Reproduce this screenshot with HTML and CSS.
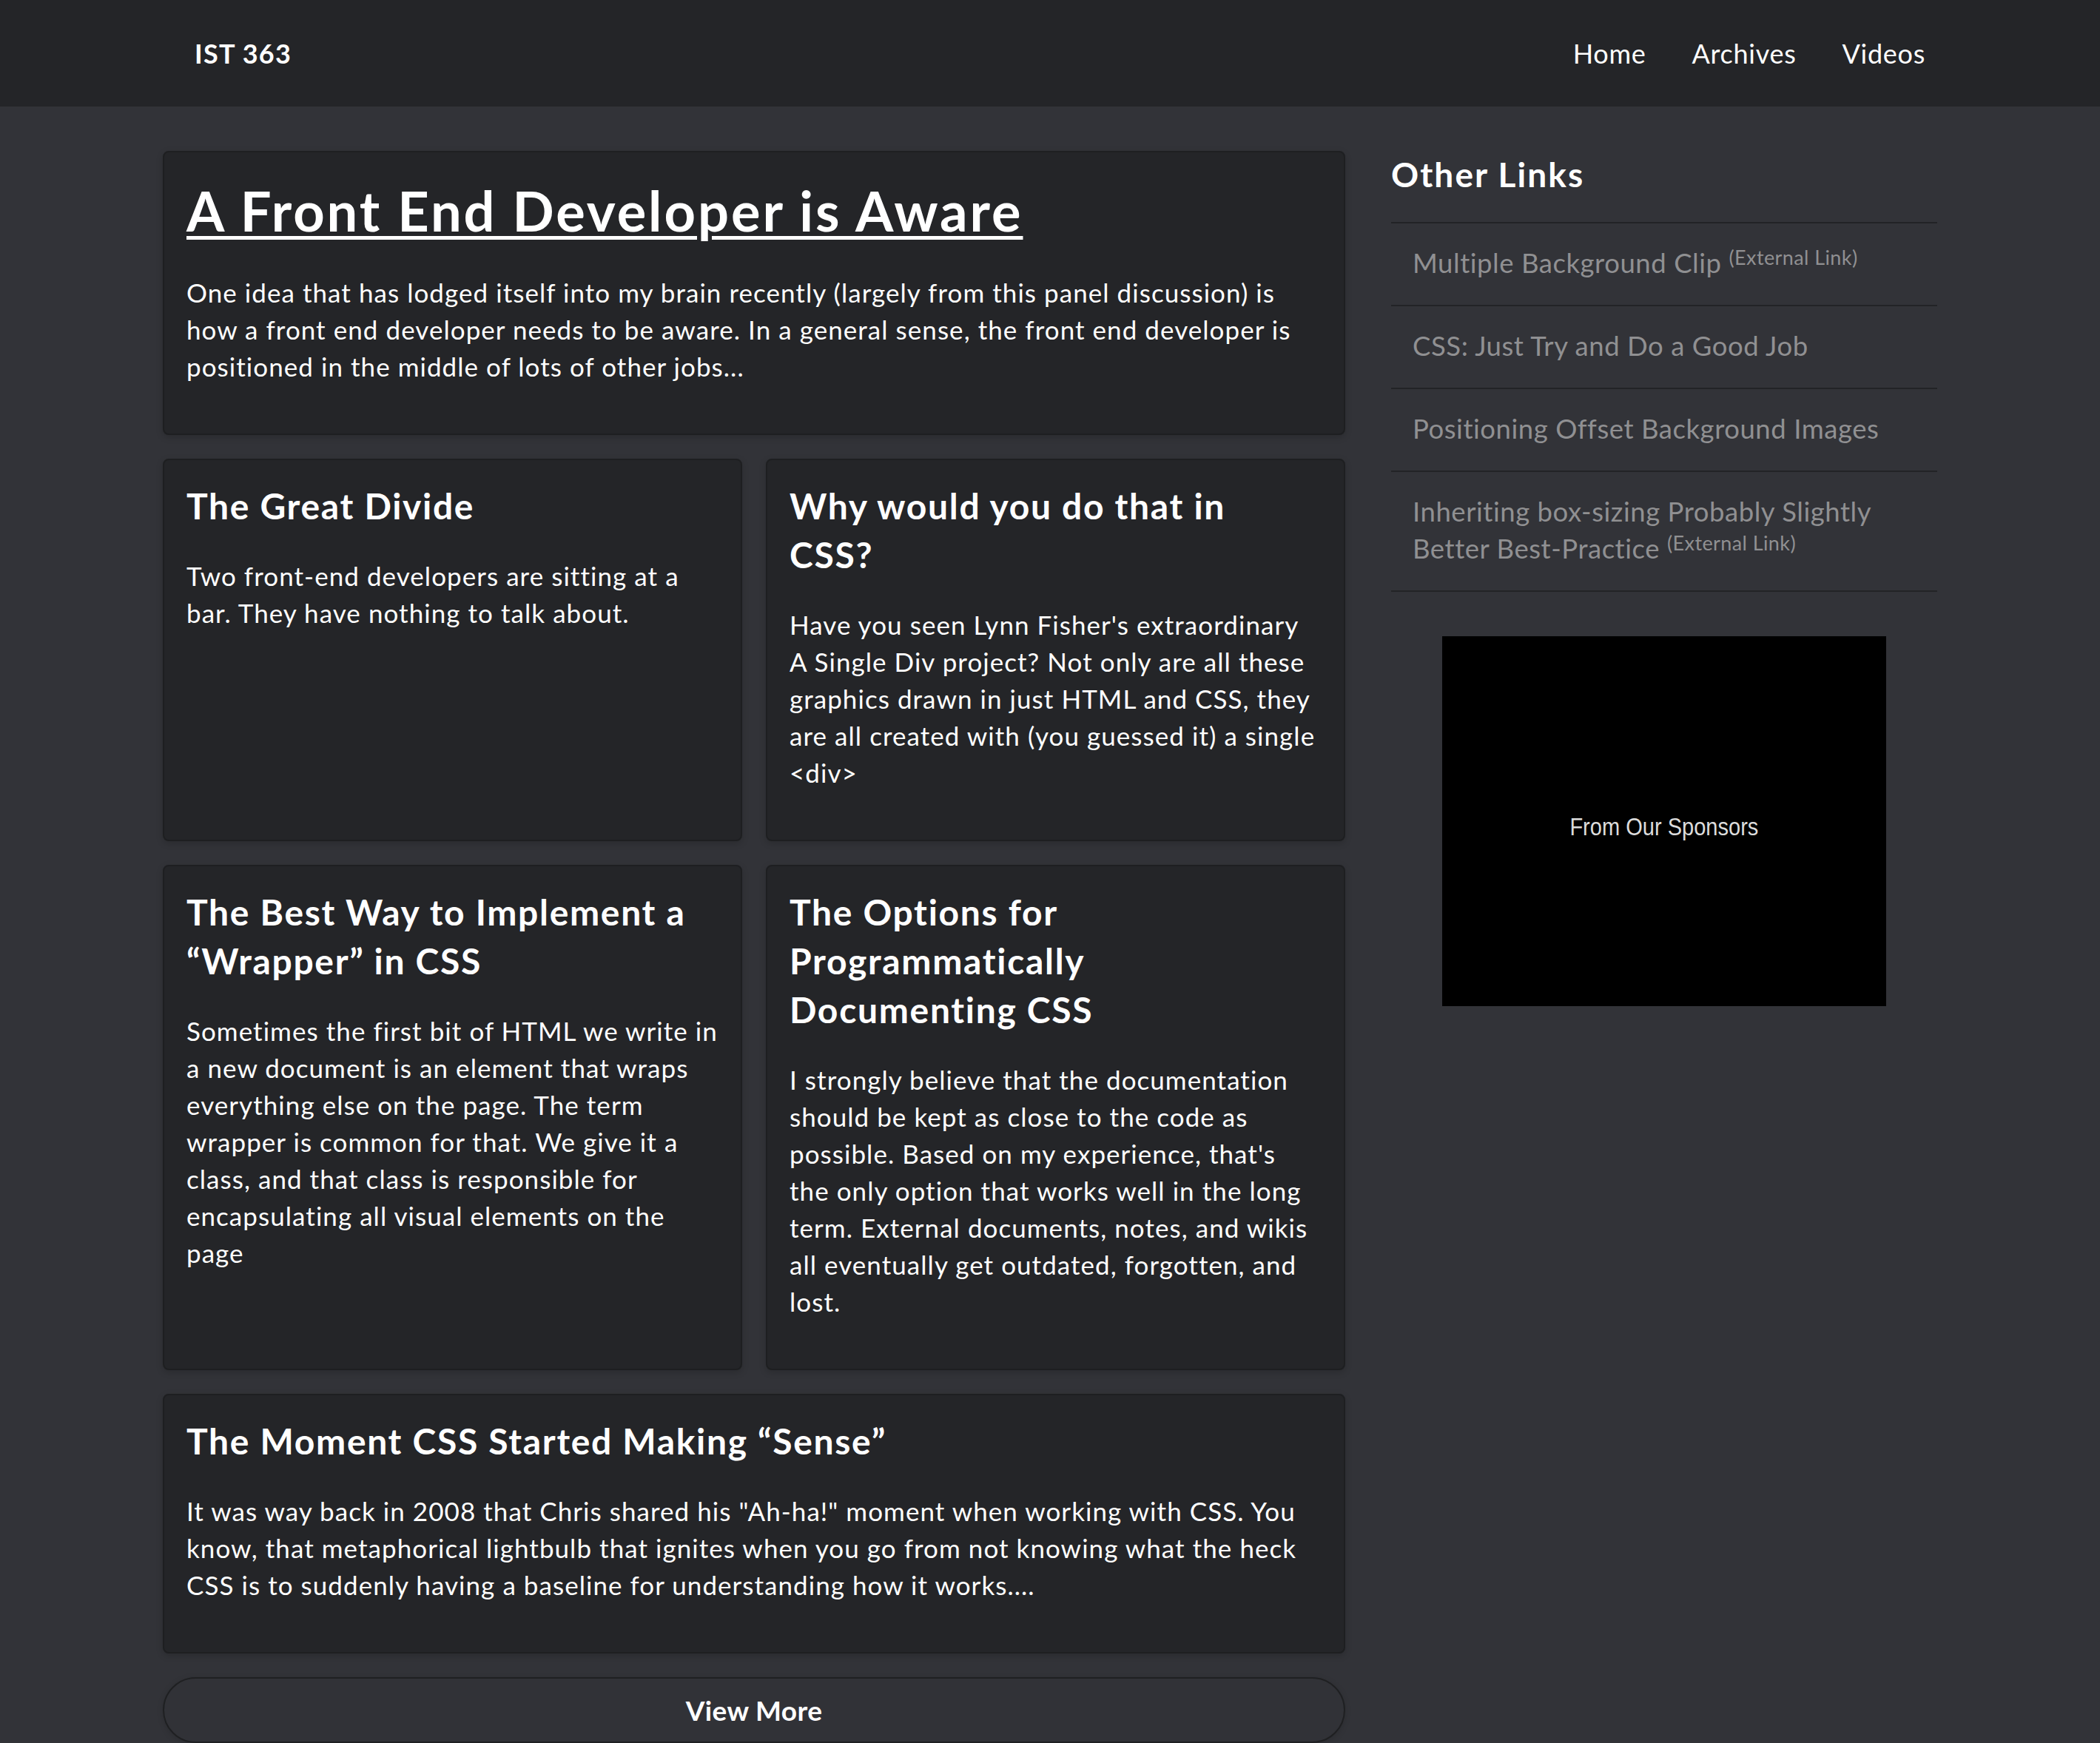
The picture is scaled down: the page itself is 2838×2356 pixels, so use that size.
FILE: index.html
```html
<!DOCTYPE html>
<html lang="en">
<head>
<meta charset="utf-8">
<title>IST 363</title>
<link rel="stylesheet" href="styles.css">
</head>
<body>
<header class="site-header">
  <div class="header-inner">
    <a class="brand" href="#">IST 363</a>
    <nav class="main-nav">
      <a href="#">Home</a>
      <a href="#">Archives</a>
      <a href="#">Videos</a>
    </nav>
  </div>
</header>

<div class="page">
  <main class="posts">
    <article class="card card-featured">
      <h1 class="featured-title"><a href="#">A Front End Developer is Aware</a></h1>
      <p>One idea that has lodged itself into my brain recently (largely from this panel discussion) is<br>how a front end developer needs to be aware. In a general sense, the front end developer is<br>positioned in the middle of lots of other jobs...</p>
    </article>

    <div class="card-grid">
      <article class="card">
        <h2>The Great Divide</h2>
        <p>Two front-end developers are sitting at a<br>bar. They have nothing to talk about.</p>
      </article>
      <article class="card">
        <h2>Why would you do that in<br>CSS?</h2>
        <p>Have you seen Lynn Fisher's extraordinary<br>A Single Div project? Not only are all these<br>graphics drawn in just HTML and CSS, they<br>are all created with (you guessed it) a single<br>&lt;div&gt;</p>
      </article>
      <article class="card">
        <h2>The Best Way to Implement a<br>“Wrapper” in CSS</h2>
        <p>Sometimes the first bit of HTML we write in<br>a new document is an element that wraps<br>everything else on the page. The term<br>wrapper is common for that. We give it a<br>class, and that class is responsible for<br>encapsulating all visual elements on the<br>page</p>
      </article>
      <article class="card">
        <h2>The Options for<br>Programmatically<br>Documenting CSS</h2>
        <p>I strongly believe that the documentation<br>should be kept as close to the code as<br>possible. Based on my experience, that's<br>the only option that works well in the long<br>term. External documents, notes, and wikis<br>all eventually get outdated, forgotten, and<br>lost.</p>
      </article>
    </div>

    <article class="card">
      <h2>The Moment CSS Started Making “Sense”</h2>
      <p>It was way back in 2008 that Chris shared his "Ah-ha!" moment when working with CSS. You<br>know, that metaphorical lightbulb that ignites when you go from not knowing what the heck<br>CSS is to suddenly having a baseline for understanding how it works....</p>
    </article>

    <button class="view-more" type="button">View More</button>
  </main>

  <aside class="sidebar">
    <h2 class="sidebar-title">Other Links</h2>
    <ul class="link-list">
      <li><a href="#">Multiple Background Clip <sup>(External Link)</sup></a></li>
      <li><a href="#">CSS: Just Try and Do a Good Job</a></li>
      <li><a href="#">Positioning Offset Background Images</a></li>
      <li><a href="#">Inheriting box-sizing Probably Slightly<br>Better Best-Practice <sup>(External Link)</sup></a></li>
    </ul>
    <div class="sponsor">
      <span class="sponsor-text">From Our Sponsors</span>
    </div>
  </aside>
</div>
</body>
</html>
```

FILE: styles.css
```css
* {
  box-sizing: border-box;
}

body {
  margin: 0;
  background: #323338;
  color: #ffffff;
  font-family: "Lato", "Liberation Sans", sans-serif;
}

a {
  color: inherit;
  text-decoration: none;
}

/* Header */
.site-header {
  background: #242528;
  height: 144px;
}

.header-inner {
  width: 2398px;
  height: 100%;
  margin: 0 auto;
  padding: 0 16px 0 43px;
  display: flex;
  align-items: center;
  justify-content: space-between;
}

.brand {
  font-size: 36px;
  font-weight: 700;
  letter-spacing: 0.035em;
}

.main-nav {
  display: flex;
  gap: 62px;
  font-size: 36px;
  letter-spacing: 0.02em;
}

/* Layout */
.page {
  width: 2398px;
  margin: 60px auto 0;
  display: grid;
  grid-template-columns: 1598px 738px;
  column-gap: 62px;
  align-items: start;
}

.posts {
  display: flex;
  flex-direction: column;
  gap: 32px;
}

.card-grid {
  display: grid;
  grid-template-columns: 1fr 1fr;
  gap: 32px;
}

.card {
  background: #242528;
  border: 2px solid #1e1f21;
  border-radius: 8px;
  padding: 29px 30px 30px;
  box-shadow: 0 3px 10px rgba(0, 0, 0, 0.18);
}

.card h1,
.card h2 {
  margin: 0 0 36px;
  font-weight: 700;
}

.card h2 {
  font-size: 48px;
  line-height: 66px;
  letter-spacing: 0.035em;
}

.featured-title {
  font-size: 74px;
  line-height: 99px;
  letter-spacing: 0.04em;
}

.featured-title a {
  text-decoration: underline;
  text-decoration-thickness: 5px;
  text-underline-offset: 6px;
}

.card p {
  margin: 0 0 36px;
  font-size: 35px;
  line-height: 50px;
  letter-spacing: 0.03em;
}

.view-more {
  display: block;
  width: 100%;
  height: 89px;
  background: #313237;
  border: 2px solid #1f2022;
  border-radius: 45px;
  color: #ffffff;
  font-family: inherit;
  font-size: 37px;
  font-weight: 700;
  letter-spacing: 0.01em;
  box-shadow: 0 2px 8px rgba(0, 0, 0, 0.15);
  cursor: pointer;
}

/* Sidebar */
.sidebar-title {
  margin: 0 0 32px;
  font-size: 46px;
  line-height: 64px;
  font-weight: 700;
  letter-spacing: 0.045em;
}

.link-list {
  list-style: none;
  margin: 0;
  padding: 0;
  border-bottom: 2px solid #222326;
}

.link-list li {
  border-top: 2px solid #222326;
  padding: 28px 29px 32px;
  font-size: 36.5px;
  line-height: 50px;
  letter-spacing: 0.015em;
}

.link-list a {
  color: #909092;
}

.link-list sup {
  font-size: 27px;
  line-height: 0;
  vertical-align: 11px;
  letter-spacing: 0.015em;
}

.sponsor {
  width: 600px;
  height: 500px;
  margin: 60px auto 0;
  background: #000000;
  display: flex;
  align-items: center;
  justify-content: center;
}

.sponsor-text {
  font-family: "Liberation Sans", Arial, sans-serif;
  font-size: 33px;
  color: #dcdcdc;
  display: inline-block;
  transform: scaleX(0.88);
  margin-top: 16px;
}
```
